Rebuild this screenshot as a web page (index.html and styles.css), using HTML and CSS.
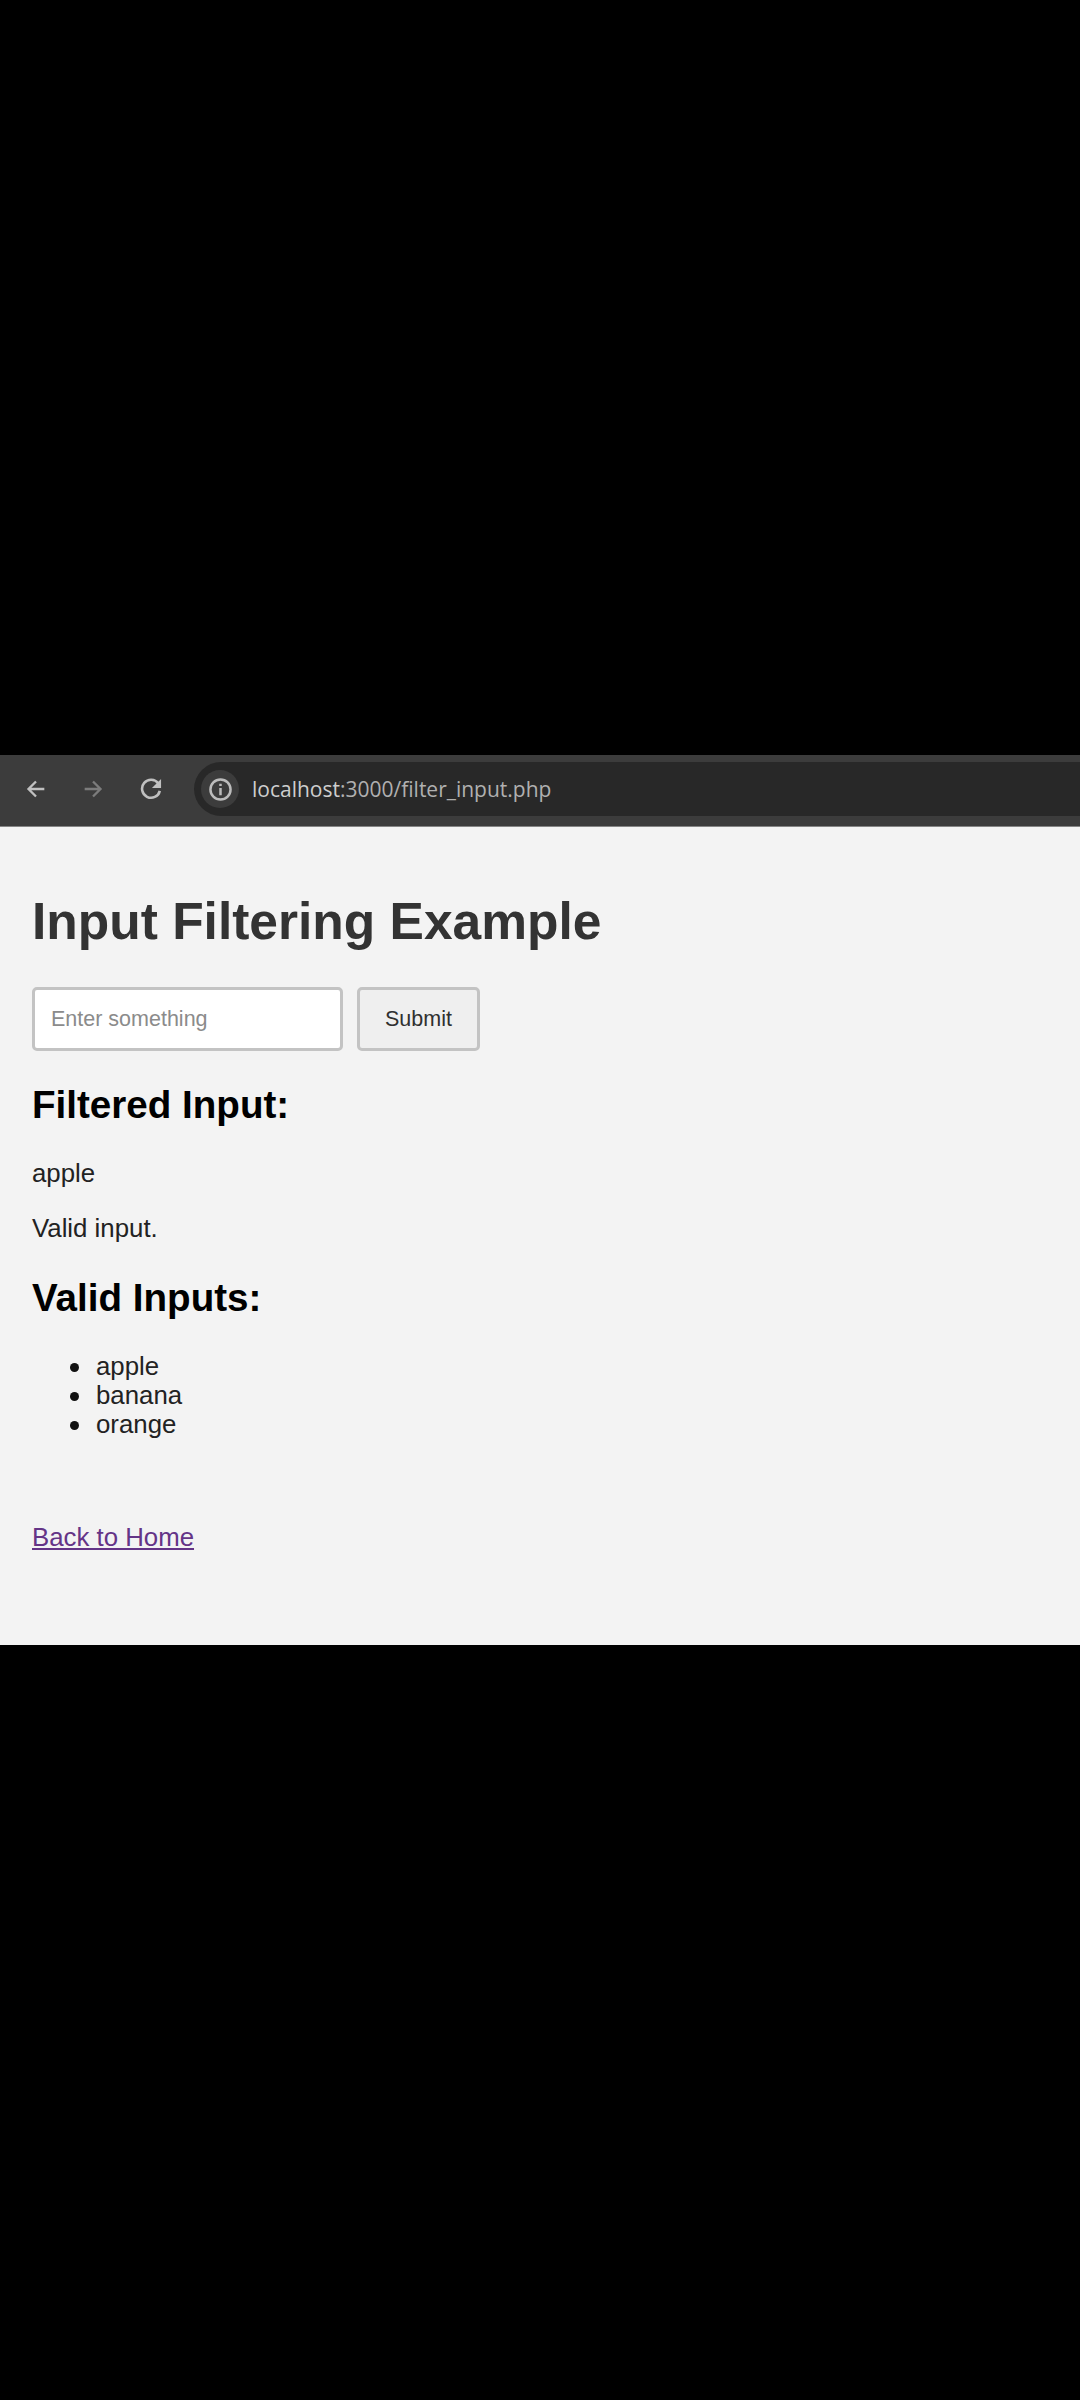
FILE: index.html
```html
<!DOCTYPE html>
<html lang="en">
<head>
<meta charset="utf-8">
<title>Input Filtering Example</title>
<link rel="stylesheet" href="styles.css">
</head>
<body>
<div class="screen">
  <header class="toolbar">
    <nav class="nav">
      <svg class="icon" viewBox="0 0 24 24"><path d="M22 12H3M12 3L3 12l9 9"/></svg>
      <svg class="icon icon-off" viewBox="0 0 24 24"><path d="M2 12h19M12 3l9 9-9 9"/></svg>
      <svg class="icon" viewBox="0 0 24 24"><path d="M20 6A9.8 9.8 0 1 0 21.6 14"/><path class="fill" d="M23 1v10H13z"/></svg>
    </nav>
    <div class="address">
      <span class="info"><svg class="icon-info" viewBox="0 0 24 24"><circle cx="12" cy="12" r="10.5"/><path d="M12 10.5V18M12 6v2.4"/></svg></span>
      <span class="url"><span class="host">localhost</span>:3000/filter_input.php</span>
    </div>
  </header>
  <main class="page">
    <h1 class="title">Input Filtering Example</h1>
    <form class="form">
      <input class="field" type="text" placeholder="Enter something">
      <button class="submit" type="button">Submit</button>
    </form>
    <h2 class="heading">Filtered Input:</h2>
    <p class="text">apple</p>
    <p class="text">Valid input.</p>
    <h2 class="heading">Valid Inputs:</h2>
    <ul class="list">
      <li class="item">apple</li>
      <li class="item">banana</li>
      <li class="item">orange</li>
    </ul>
    <a class="back" href="#">Back to Home</a>
  </main>
</div>
</body>
</html>
```
FILE: styles.css
```css
* { box-sizing: border-box; }
html, body { margin: 0; background: #000; }
body { font-family: "Liberation Sans", Arial, sans-serif; }
.screen { height: 2400px; padding: 755px 0; overflow: hidden; }

.toolbar {
  display: flex;
  height: 72px;
  padding: 7px 0 10px 26px;
  background: #3c3c3c;
  border-bottom: 1px solid #858585;
}
.nav { display: flex; align-items: center; gap: 37px; width: 168px; }
.icon {
  width: 20px;
  height: 20px;
  flex: none;
  fill: none;
  stroke: #c0c0c0;
  stroke-width: 2.8;
}
.icon-off { stroke: #7c7c7c; }
.nav .icon:last-child { width: 22px; height: 22px; }
.icon .fill { fill: #c0c0c0; stroke: none; }
.address {
  display: flex;
  flex: 1;
  align-items: center;
  height: 54px;
  padding-left: 7px;
  background: #282828;
  border-radius: 27px 0 0 27px;
}
.info {
  display: flex;
  align-items: center;
  justify-content: center;
  width: 38px;
  height: 38px;
  border-radius: 50%;
  background: #3c3c3c;
}
.icon-info { width: 23px; height: 23px; fill: none; stroke: #bcbcbc; stroke-width: 2.6; }
.url {
  margin-left: 13px;
  font: 500 21px/28px "Open Sans", "Noto Sans", sans-serif;
  color: #b0b0b0;
  white-space: nowrap;
}
.host { color: #cecece; }

.page { height: 818px; padding: 64px 32px 0; background: #f3f3f3; color: #000; }
.title { margin: 0 0 36px; font-size: 51.5px; line-height: 60px; color: #333; }
.form { display: flex; gap: 14px; height: 64px; margin: 0 0 32px; }
.field, .submit {
  height: 64px;
  border: 3px solid #c3c3c3;
  border-radius: 5px;
  font: 21.5px "Liberation Sans", Arial, sans-serif;
}
.field { width: 311px; padding: 0 16px; background: #fff; }
.field::placeholder { color: #8b8b8b; opacity: 1; }
.submit { width: 123px; padding: 0; background: #efefef; color: #303030; }
.heading { margin: 0 0 32px; font-size: 38.6px; line-height: 44px; }
.text { margin: 0 0 26px; font-size: 25.8px; line-height: 29px; color: #222; }
.text + .heading { margin-top: 33px; }
.list { margin: 0 0 84px; padding-left: 38px; font-size: 25.8px; line-height: 29px; color: #222; list-style: none; }
.item { display: flex; align-items: center; gap: 17px; }
.item::before { content: ""; width: 9px; height: 9px; margin-top: 1px; border-radius: 50%; background: #111; }
.back { display: block; width: max-content; font-size: 25.8px; line-height: 29px; color: #643487; }
```
